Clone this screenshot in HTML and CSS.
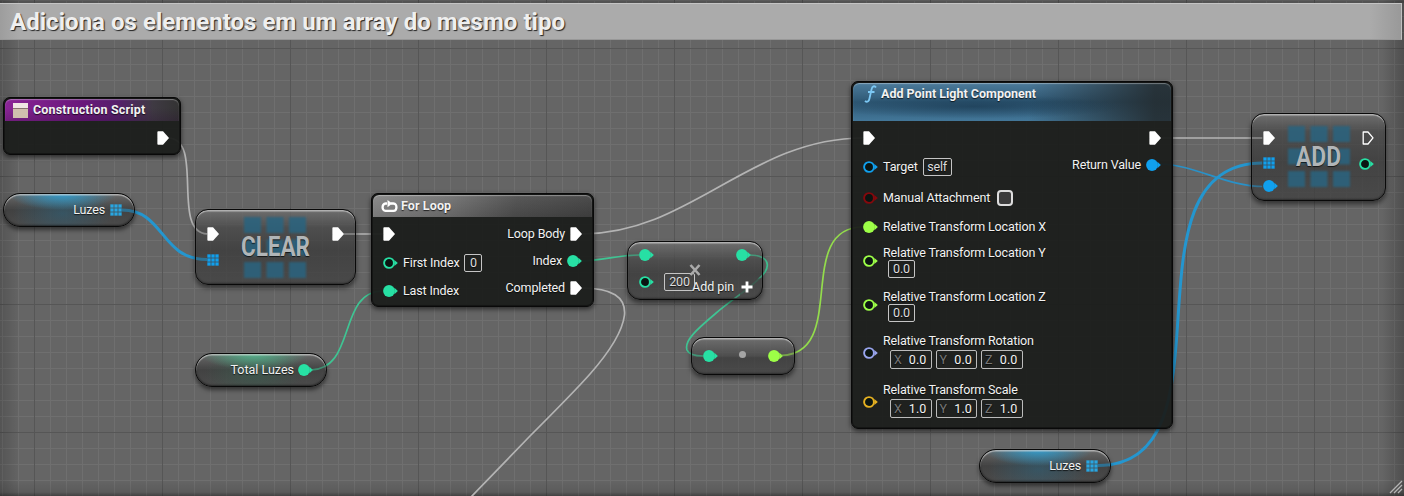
FILE: index.html
```html
<!DOCTYPE html>
<html lang="pt-BR">
<head>
<meta charset="utf-8">
<title>Construction Script</title>
<link rel="stylesheet" href="styles.css">
</head>
<body>
<svg class="defs" aria-hidden="true">
  <symbol id="exec" viewBox="0 0 12 14"><path d="M1.200.3H6l5.600 6.300v.8L6 13.700H1.200q-.8 0-.8-.8V1.100q0-.8.8-.8z" fill="#fff"/></symbol>
  <symbol id="exec-open" viewBox="0 0 12 14"><path d="M1.200 1H6l5 5.900L6 13H1.200z" fill="none" stroke="#fff" stroke-width="1.300" stroke-linejoin="round"/></symbol>
  <symbol id="pin" viewBox="0 0 16 14"><circle cx="6" cy="7" r="5.900" fill="currentColor"/><path d="M11.400 3.800 14.900 7l-3.500 3.200z" fill="currentColor"/></symbol>
  <symbol id="pin-open" viewBox="0 0 16 14"><circle cx="6" cy="7" r="4.900" fill="#0b1512" stroke="currentColor" stroke-width="1.900"/><path d="M11.400 3.900 14.800 7l-3.400 3.100z" fill="currentColor"/></symbol>
  <symbol id="array" viewBox="0 0 12 12"><path d="M.5.5h3v3h-3zM4.5.5h3v3h-3zM8.5.5h3v3h-3zM.5 4.5h3v3h-3zM4.5 4.5h3v3h-3zM8.5 4.5h3v3h-3zM.5 8.5h3v3h-3zM4.5 8.5h3v3h-3zM8.5 8.5h3v3h-3z" fill="currentColor" stroke="currentColor" stroke-width=".3"/></symbol>
  <symbol id="tiles" viewBox="0 0 62 61"><path d="M0 0h17v16H0zM22.500 0h17v16h-17zM45 0h17v16H45zM0 22.500h17v16H0zM22.500 22.500h17v16h-17zM45 22.500h17v16H45zM0 45h17v16H0zM22.500 45h17v16h-17zM45 45h17v16H45z" fill="#2a6480"/></symbol>
</svg>

<main class="graph">
  <header class="comment">Adiciona os elementos em um array do mesmo tipo</header>

  <svg class="wires" width="1404" height="496" viewBox="0 0 1404 496">
    <g id="wire-set">
      <g class="wire-exec">
        <path d="M168 138C205 138 170 234 208 234"/>
        <path d="M343 234H383"/>
        <path d="M582 234C690 234 750 138 863 138"/>
        <path d="M582 288C612 288 626 297 624.500 315C622 335 605 357 590 374S548 418 530 436L471 497"/>
        <path d="M1161 138H1263"/>
      </g>
      <g class="wire-int">
        <path d="M310 370C357 370 337 291 383 291"/>
        <path d="M579 261C605 261 615 255 639 255"/>
        <path d="M749 255C765 255 771 262 765 272C756 285 733 298 715 314C696 330 684 341 687 350C689 355 696 356 703 356"/>
      </g>
      <path class="wire-float" d="M780 355.500C850 355.500 793 227 863 227"/>
      <path class="wire-object" d="M1158 164C1195 164 1225 186.500 1263 186.500"/>
      <path class="wire-array" d="M122 210C165 210 160 259.500 207 259.500"/>
      <path class="wire-array" d="M1098 465.500C1240 465.500 1115 163 1263 163"/>
    </g>
  </svg>

  <section class="node solid construction">
    <div class="title event"><svg class="event-icon" viewBox="0 0 15 15"><path d="M0 0h15v5H0z" fill="#efe5e4"/><path d="M0 6h15v9H0z" fill="#d0bfae"/><path d="M0 5h15v1H0z" fill="#86736f"/></svg><span>Construction Script</span></div>
    <div class="body"><div class="col out"><div class="row"><svg class="exec"><use href="#exec"/></svg></div></div></div>
  </section>

  <section class="node pill blue luzes-a"><span>Luzes</span><svg class="array"><use href="#array"/></svg></section>

  <section class="node compact clear">
    <svg class="emblem" viewBox="0 0 80 74"><use href="#tiles" x="9" y="6" width="62" height="61" class="soft"/><text x="6" y="45" textLength="69" lengthAdjust="spacingAndGlyphs">CLEAR</text></svg>
    <div class="col in"><div class="row"><svg class="exec"><use href="#exec"/></svg></div><div class="row c-blue"><svg class="array"><use href="#array"/></svg></div></div>
    <div class="col out"><div class="row"><svg class="exec"><use href="#exec"/></svg></div></div>
  </section>

  <section class="node pill green total"><span>Total Luzes</span><svg class="pin"><use href="#pin"/></svg></section>

  <section class="node solid loop">
    <div class="title macro"><svg class="loop-icon" viewBox="0 0 17 13"><path d="M6 3.500H4.500C.6 3.500 .6 10.800 4.500 10.800H12.500C16.400 10.800 16.400 3.500 12.500 3.500H10" fill="none" stroke="#fff" stroke-width="2.300"/><path d="M6.500 0 11.300 3.500 6.500 7.200z" fill="#fff"/></svg><span>For Loop</span></div>
    <div class="body">
      <div class="col in">
        <div class="row"><svg class="exec"><use href="#exec"/></svg></div>
        <div class="row c-green"><svg class="pin"><use href="#pin-open"/></svg><span class="lbl">First Index</span><span class="box b17">0</span></div>
        <div class="row c-green"><svg class="pin"><use href="#pin"/></svg><span class="lbl">Last Index</span></div>
      </div>
      <div class="col out">
        <div class="row"><span>Loop Body</span><svg class="exec"><use href="#exec"/></svg></div>
        <div class="row c-green"><span>Index</span><svg class="pin"><use href="#pin"/></svg></div>
        <div class="row"><span>Completed</span><svg class="exec"><use href="#exec"/></svg></div>
      </div>
    </div>
  </section>

  <section class="node compact multiply">
    <svg class="times" viewBox="0 0 12 12"><path d="M1.500 1 10.500 11M10.500 1 1.500 11" stroke="#aaa" stroke-width="2.600"/></svg>
    <div class="col in"><div class="row c-green"><svg class="pin"><use href="#pin"/></svg></div><div class="row c-green"><svg class="pin"><use href="#pin-open"/></svg><span class="box b30">200</span></div></div>
    <div class="col out"><div class="row c-green"><svg class="pin"><use href="#pin"/></svg></div><div class="row add-pin"><span>Add pin</span><svg class="plus" viewBox="0 0 12 12"><path d="M6 .5v11M.5 6h11" stroke="#fff" stroke-width="2.800"/></svg></div></div>
  </section>

  <section class="node compact convert">
    <svg class="pin c-green"><use href="#pin"/></svg><i class="dot"></i><svg class="pin c-lime"><use href="#pin"/></svg>
  </section>

  <section class="node solid light">
    <div class="title func"><svg class="f-icon" viewBox="0 0 13 18"><path d="M12 2.500C10.500.2 8.200 1.200 7.500 4.500L5.500 13.500C5 16.500 3 17.700 1 15.800M4 7H10.500" fill="none" stroke="#7cc8f4" stroke-width="1.800"/></svg><span>Add Point Light Component</span></div>
    <div class="body">
      <div class="col in">
        <div class="row"><svg class="exec"><use href="#exec"/></svg></div>
        <div class="row c-blue r-target"><svg class="pin"><use href="#pin-open"/></svg><span class="lbl">Target</span><span class="box b29">self</span></div>
        <div class="row c-red r-manual"><svg class="pin"><use href="#pin-open"/></svg><span class="lbl">Manual Attachment</span><i class="check"></i></div>
        <div class="row c-lime r-x"><svg class="pin"><use href="#pin"/></svg><span class="lbl">Relative Transform Location X</span></div>
        <div class="group c-lime r-y"><svg class="pin"><use href="#pin-open"/></svg><div class="stack"><span class="lbl">Relative Transform Location Y</span><span class="box b27">0.0</span></div></div>
        <div class="group c-lime r-z"><svg class="pin"><use href="#pin-open"/></svg><div class="stack"><span class="lbl">Relative Transform Location Z</span><span class="box b27">0.0</span></div></div>
        <div class="group c-rot vec r-rot"><svg class="pin"><use href="#pin-open"/></svg><div class="stack"><span class="lbl">Relative Transform Rotation</span><div class="fields"><span class="field"><b>X</b>0.0</span><span class="field"><b>Y</b>0.0</span><span class="field"><b>Z</b>0.0</span></div></div></div>
        <div class="group c-gold vec r-scale"><svg class="pin"><use href="#pin-open"/></svg><div class="stack"><span class="lbl">Relative Transform Scale</span><div class="fields"><span class="field"><b>X</b>1.0</span><span class="field"><b>Y</b>1.0</span><span class="field"><b>Z</b>1.0</span></div></div></div>
      </div>
      <div class="col out">
        <div class="row"><svg class="exec"><use href="#exec"/></svg></div>
        <div class="row c-blue"><span>Return Value</span><svg class="pin"><use href="#pin"/></svg></div>
      </div>
    </div>
  </section>

  <section class="node compact add">
    <svg class="emblem" viewBox="0 0 80 74"><use href="#tiles" x="9" y="6" width="62" height="61" class="soft"/><text x="17" y="46" textLength="45" lengthAdjust="spacingAndGlyphs">ADD</text></svg>
    <div class="col in"><div class="row"><svg class="exec"><use href="#exec"/></svg></div><div class="row c-blue"><svg class="array"><use href="#array"/></svg></div><div class="row c-blue"><svg class="pin"><use href="#pin"/></svg></div></div>
    <div class="col out"><div class="row"><svg class="exec"><use href="#exec-open"/></svg></div><div class="row c-green"><svg class="pin"><use href="#pin-open"/></svg></div></div>
  </section>

  <section class="node pill blue luzes-b"><span>Luzes</span><svg class="array"><use href="#array"/></svg></section>

  <!-- Faint continuation of the wires across the translucent nodes -->
  <svg class="wires wires-over" width="1404" height="496" viewBox="0 0 1404 496">
    <clipPath id="translucent"><path d="M122 194H134V226H122zM196 210H207V284H196zM343 210H355V284H343zM311 354H326V386H311zM628 242H639V298H628zM750 242H762V278L740 281V298H728V291L750 276zM692 338H703V374H692zM780 338H794V374H780zM1252 114H1262V200H1252zM1098 450H1110V482H1098z"/></clipPath>
    <use href="#wire-set" clip-path="url(#translucent)"/>
  </svg>

  <svg class="grip" viewBox="0 0 14 13"><path d="M1 12 13 0M5 12 13 4M9 12 13 8" stroke="#b5b5b5" stroke-width="1.300"/></svg>
</main>
</body>
</html>
```
FILE: styles.css
```css
* { box-sizing: border-box; }
body { margin: 0; background: #666; font-family: Roboto, "Liberation Sans", sans-serif; font-size: 12.5px; line-height: 16px; letter-spacing: -.14px; color: #f2f2f2; }
svg { display: block; flex: none; overflow: visible; }
.defs { position: absolute; width: 0; height: 0; }

.graph {
  position: relative; width: 1404px; height: 496px; overflow: hidden; padding-top: 3px;
  background-color: #656565;
  background-image:
    linear-gradient(to right, rgba(0,0,0,.17), transparent 20px, transparent 1382px, rgba(0,0,0,.22)),
    linear-gradient(to top, rgba(0,0,0,.35), rgba(0,0,0,.1) 4px, transparent 16px),
    linear-gradient(to bottom, rgba(0,0,0,.18) 3px, transparent 3px),
    linear-gradient(to right, #565656 1px, transparent 1px),
    linear-gradient(to bottom, #565656 1px, transparent 1px),
    linear-gradient(to right, #6f6f6f 1px, transparent 1px),
    linear-gradient(to bottom, #6f6f6f 1px, transparent 1px);
  background-size: auto, auto, auto, 128px 128px, 128px 128px, 16px 16px, 16px 16px;
  background-position: 0 0, 0 0, 0 0, 34px 48px, 34px 48px, 2px 0, 2px 0;
}
.comment {
  width: 1402px; height: 37px; padding-left: 10px;
  border-top: 1px solid #c4c4c4; border-bottom: 1px solid #989898; border-right: 1px solid #c0c0c0;
  background: linear-gradient(to right, #9d9d9d, #ababab 20px, #ababab 1370px, #999);
  font-size: 24px; font-weight: 700; line-height: 37px; letter-spacing: .04px; color: #efefef; white-space: nowrap;
  text-shadow: 1px 1px 1px #222;
}
.wires { position: absolute; left: 0; top: 0; fill: none; }
.wires path { fill: none; stroke-width: 1.7; }
.wires-over { opacity: .5; pointer-events: none; }
.wire-exec { stroke: #b4b4b4; }
.wire-int { stroke: #3fc493; }
.wire-float { stroke: #93dc4c; }
.wire-object { stroke: #2a91c7; }
.wires .wire-array { stroke: #2496cf; stroke-width: 3; }

.node { position: absolute; display: flex; border: 1px solid #090909; white-space: nowrap; text-shadow: 0 1px 1px rgba(0,0,0,.7); }
.solid { flex-direction: column; border-radius: 7px; background: rgba(27,29,27,.95); box-shadow: 0 2px 5px rgba(0,0,0,.6), inset 0 0 0 1px rgba(0,0,0,.35); }
.compact { border-radius: 13px; border-width: 1.500px; background: linear-gradient(rgba(112,112,112,.8), rgba(70,70,70,.76) 18px, rgba(56,56,56,.76) 55%, rgba(66,66,66,.8)); box-shadow: 0 3px 5px rgba(0,0,0,.5), inset 0 1.500px 1px rgba(220,220,220,.65), inset 0 -1px 2px rgba(0,0,0,.4); }
.pill { width: 132px; height: 34px; border-radius: 17px; align-items: center; justify-content: flex-end; gap: 5px; padding-right: 12px; box-shadow: 0 3px 4px rgba(0,0,0,.5), inset 0 1.500px 1px rgba(220,220,220,.65), inset 0 -1px 2px rgba(0,0,0,.5); }
.pill.blue { background: radial-gradient(ellipse 54px 16px at 45% 0, rgba(45,160,212,.9), transparent), radial-gradient(ellipse 50px 26px at 45% 60%, rgba(36,110,145,.4), transparent), linear-gradient(rgba(105,105,105,.9), rgba(60,60,60,.85) 50%, rgba(72,72,72,.9)); }
.pill.green { padding-right: 12px; gap: 4px; letter-spacing: 0; background: radial-gradient(ellipse 54px 16px at 45% 0, rgba(80,190,145,.85), transparent), radial-gradient(ellipse 50px 26px at 45% 60%, rgba(50,110,85,.4), transparent), linear-gradient(rgba(105,105,105,.9), rgba(60,60,60,.85) 50%, rgba(72,72,72,.9)); }
.pill .array { color: #29a6e2; }
.pill .pin { color: #27e0a4; }

.title { display: flex; align-items: center; flex: none; height: 22px; margin: 1px 1px 0; border-radius: 6px 6px 0 0; font-weight: 700; font-size: 12.500px; letter-spacing: 0; box-shadow: inset 0 1px 1px rgba(255,255,255,.35); }
.event { gap: 5px; padding-left: 8px; letter-spacing: .17px; background: linear-gradient(to bottom, transparent 40%, rgba(40,10,50,.25)), linear-gradient(to right, #8a2596, #69177a 45%, #55206a 65%, #3f3a43 85%, #333); }
.macro { gap: 3px; padding-left: 8px; letter-spacing: .1px; background: linear-gradient(rgba(255,255,255,.06), rgba(0,0,0,.08)), linear-gradient(100deg, #858585, #707070 35%, #4e4e4e 65%, #414141); }
.func { align-items: flex-start; gap: 4px; padding: 3px 0 0 11px; height: 38px; background: radial-gradient(ellipse 150px 12px at 38% 62%, rgba(20,48,70,.55), transparent), linear-gradient(to right, transparent 55%, rgba(36,44,48,.9) 95%), linear-gradient(#4c7b9b, #2e5875 50%, #437799); }
.event-icon { width: 15px; height: 15px; }
.loop-icon { width: 17px; height: 13px; }
.f-icon { width: 13px; height: 18px; margin-top: -1px; }

.body { display: flex; justify-content: space-between; flex: 1; padding: 7px 11px 0; }
.col { display: flex; flex-direction: column; }
.row { display: flex; align-items: center; height: 18px; gap: 4px; }
.out { align-items: flex-end; }
.out .row { gap: 5px; }
.out .pin { margin-right: -1px; }
.exec { width: 12px; height: 14px; }
.pin { width: 16px; height: 14px; }
.array { width: 12px; height: 12px; }
.box { display: flex; align-items: center; justify-content: center; height: 18px; border: 1px solid #c5c5c5; border-radius: 2px; color: #ddd; }
.row .box { margin-left: 1px; }
.b17 { width: 18px; } .b27 { width: 27px; margin-left: 5px; } .b29 { width: 29px; } .b30 { width: 31px; }
.check { width: 16px; height: 16px; border: 2px solid #ddd; border-radius: 4px; background: #3c3c3c; }
.c-green { color: #27e0a4; } .c-blue { color: #10a0ee; } .c-red { color: #85080c; } .c-lime { color: #9dff47; } .c-rot { color: #99a5ee; } .c-gold { color: #e6b121; }
.row span:not(.box), .lbl { color: #f2f2f2; }
.group { display: flex; align-items: center; gap: 4px; height: 35px; }
.stack { display: flex; flex-direction: column; height: 100%; }
.stack .lbl { height: 16px; line-height: 18px; }
.vec { height: 38px; }
.vec .pin { margin-top: 4px; }
.vec .lbl { height: 18px; }
.fields { display: flex; gap: 4px; padding-left: 7px; }
.field { display: flex; justify-content: space-between; width: 41.500px; height: 19px; padding: 0 4px 0 3px; border: 1px solid #bcbcbc; border-radius: 2px; line-height: 18px; letter-spacing: .1px; color: #f2f2f2; }
.field b { font-weight: 400; color: #777; }

.construction { left: 3px; top: 97px; width: 178px; height: 58px; }
.construction .body { padding-top: 8px; justify-content: flex-end; }
.luzes-a { left: 3px; top: 193px; }
.luzes-b { left: 979px; top: 449px; }
.total { left: 195px; top: 353px; }

.clear { left: 195px; top: 209px; width: 161px; height: 76px; justify-content: space-between; padding: 15px 11px 0; }
.clear .in { gap: 7.500px; }
.emblem { position: absolute; width: 80px; height: 74px; left: 39px; top: 1px; font-size: 28px; font-weight: 700; letter-spacing: 0; }
.emblem text { fill: #b1b5b7; }
.soft { filter: blur(.9px); opacity: .85; }
.add { left: 1251px; top: 113px; width: 135px; height: 88px; justify-content: space-between; padding: 15px 11px 0; }
.add .in { gap: 6px; }
.add .in .row:nth-child(2) { margin-top: 1px; margin-bottom: -1px; }
.add .out { gap: 7.500px; }
.add .emblem { left: 27px; top: 6px; }

.loop { left: 371px; top: 193px; width: 223px; height: 114px; }
.loop .body { padding-top: 8px; }
.loop .in { gap: 10.500px; }
.loop .out { gap: 9px; }

.multiply { left: 627px; top: 241px; width: 136px; height: 59px; justify-content: space-between; padding: 4px 9px 0 11px; }
.multiply .in { gap: 8.500px; }
.multiply .box { margin-left: 5px; }
.multiply .out { gap: 13.500px; }
.multiply .out .pin { margin-right: 1px; }
.multiply .add-pin { gap: 7px; margin-left: -30px; letter-spacing: -.05px; }
.times { position: absolute; left: 61px; top: 22px; width: 12px; height: 12px; }
.plus { width: 12px; height: 12px; }
.convert { left: 691px; top: 337px; width: 104px; height: 38px; align-items: center; justify-content: space-between; padding: 0 10px 1px 11px; }
.dot { width: 7px; height: 7px; margin: -2px 3px 0 0; border-radius: 50%; background: #a5a5a5; }

.light { left: 851px; top: 81px; width: 322px; height: 348px; }
.light .body { padding-top: 8px; }
.r-target { margin-top: 10.500px; } .r-manual { margin-top: 13px; } .r-x { margin-top: 11px; }
.r-manual .check { margin-left: 3px; }
.r-y { margin-top: 8px; } .r-z { margin-top: 9px; } .r-rot { margin-top: 9px; } .r-scale { margin-top: 11px; }
.light .out { gap: 8.500px; }

.grip { position: absolute; right: 1px; bottom: 2px; width: 14px; height: 13px; }
```
